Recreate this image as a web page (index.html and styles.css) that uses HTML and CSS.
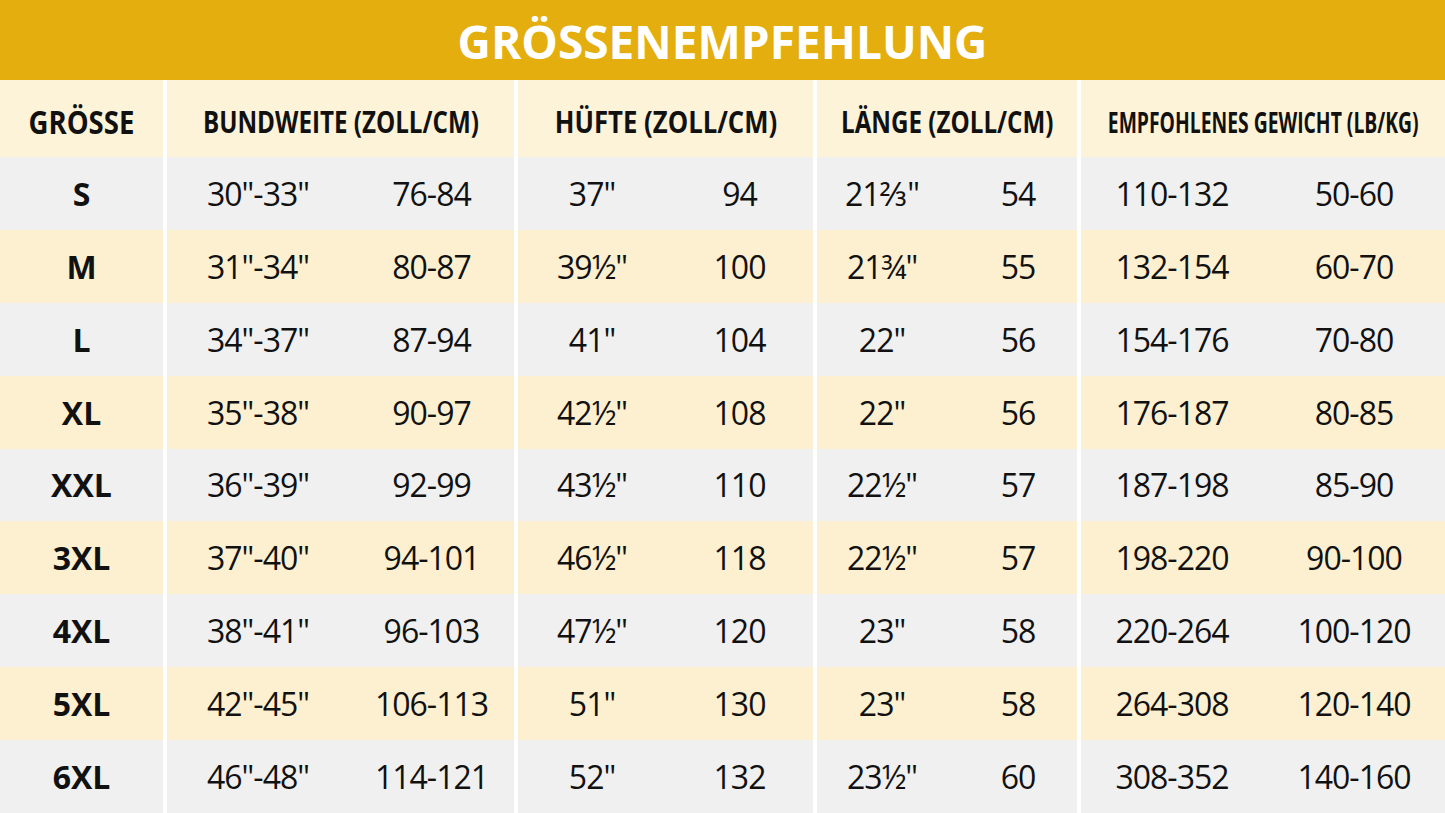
FILE: index.html
```html
<!DOCTYPE html>
<html lang="de">
<head>
<meta charset="utf-8">
<title>Größenempfehlung</title>
<link rel="stylesheet" href="styles.css">
</head>
<body>
<div class="page">
  <header class="title-bar"><h1 class="title">GRÖSSENEMPFEHLUNG</h1></header>
  <div class="table">
    <div class="row head">
      <div class="cell"><span class="cond first">GRÖSSE</span></div>
      <div class="cell grp span2"><span class="cond">BUNDWEITE (ZOLL/CM)</span></div>
      <div class="cell grp span2"><span class="cond wide">HÜFTE (ZOLL/CM)</span></div>
      <div class="cell grp span2"><span class="cond">LÄNGE (ZOLL/CM)</span></div>
      <div class="cell grp span2"><span class="cond tight">EMPFOHLENES GEWICHT (LB/KG)</span></div>
    </div>
    <div class="row gray">
      <div class="cell size">S</div>
      <div class="cell grp">30"-33"</div><div class="cell">76-84</div>
      <div class="cell grp">37"</div><div class="cell">94</div>
      <div class="cell grp">21⅔"</div><div class="cell shift">54</div>
      <div class="cell grp">110-132</div><div class="cell">50-60</div>
    </div>
    <div class="row yellow">
      <div class="cell size">M</div>
      <div class="cell grp">31"-34"</div><div class="cell">80-87</div>
      <div class="cell grp">39½"</div><div class="cell">100</div>
      <div class="cell grp">21¾"</div><div class="cell shift">55</div>
      <div class="cell grp">132-154</div><div class="cell">60-70</div>
    </div>
    <div class="row gray">
      <div class="cell size">L</div>
      <div class="cell grp">34"-37"</div><div class="cell">87-94</div>
      <div class="cell grp">41"</div><div class="cell">104</div>
      <div class="cell grp">22"</div><div class="cell shift">56</div>
      <div class="cell grp">154-176</div><div class="cell">70-80</div>
    </div>
    <div class="row yellow">
      <div class="cell size">XL</div>
      <div class="cell grp">35"-38"</div><div class="cell">90-97</div>
      <div class="cell grp">42½"</div><div class="cell">108</div>
      <div class="cell grp">22"</div><div class="cell shift">56</div>
      <div class="cell grp">176-187</div><div class="cell">80-85</div>
    </div>
    <div class="row gray">
      <div class="cell size">XXL</div>
      <div class="cell grp">36"-39"</div><div class="cell">92-99</div>
      <div class="cell grp">43½"</div><div class="cell">110</div>
      <div class="cell grp">22½"</div><div class="cell shift">57</div>
      <div class="cell grp">187-198</div><div class="cell">85-90</div>
    </div>
    <div class="row yellow">
      <div class="cell size">3XL</div>
      <div class="cell grp">37"-40"</div><div class="cell">94-101</div>
      <div class="cell grp">46½"</div><div class="cell">118</div>
      <div class="cell grp">22½"</div><div class="cell shift">57</div>
      <div class="cell grp">198-220</div><div class="cell">90-100</div>
    </div>
    <div class="row gray">
      <div class="cell size">4XL</div>
      <div class="cell grp">38"-41"</div><div class="cell">96-103</div>
      <div class="cell grp">47½"</div><div class="cell">120</div>
      <div class="cell grp">23"</div><div class="cell shift">58</div>
      <div class="cell grp">220-264</div><div class="cell">100-120</div>
    </div>
    <div class="row yellow">
      <div class="cell size">5XL</div>
      <div class="cell grp">42"-45"</div><div class="cell">106-113</div>
      <div class="cell grp">51"</div><div class="cell">130</div>
      <div class="cell grp">23"</div><div class="cell shift">58</div>
      <div class="cell grp">264-308</div><div class="cell">120-140</div>
    </div>
    <div class="row gray">
      <div class="cell size">6XL</div>
      <div class="cell grp">46"-48"</div><div class="cell">114-121</div>
      <div class="cell grp">52"</div><div class="cell">132</div>
      <div class="cell grp">23½"</div><div class="cell shift">60</div>
      <div class="cell grp">308-352</div><div class="cell">140-160</div>
    </div>
  </div>
</div>
</body>
</html>
```
FILE: styles.css
```css
* { box-sizing: border-box; margin: 0; padding: 0; }
html, body { width: 100%; height: 100%; }
body {
  background: #ffffff;
  font-family: "Open Sans", "Noto Sans", "DejaVu Sans", sans-serif;
  color: #111111;
  overflow: hidden;
}
.page {
  height: 813px;
  display: grid;
  grid-template-rows: 80px 1fr;
}
.title-bar {
  background: #e4ae0f;
  display: flex;
  align-items: center;
  justify-content: center;
}
.title {
  color: #ffffff;
  font-size: 46px;
  font-weight: 700;
  line-height: 1;
  padding-top: 2px;
}
.table {
  display: grid;
  grid-template-rows: 77px repeat(9, 1fr);
}
.row {
  display: grid;
  grid-template-columns: 163px 186px 165px 152px 147px 134px 130px 186px 182px;
}
.row.gray { background: #f0f0f0; }
.row.yellow { background: #fcf0d0; }
.row.head { background: #fdf3d8; }
.cell {
  display: flex;
  align-items: center;
  justify-content: center;
  font-size: 32px;
  font-weight: 400;
  letter-spacing: -1px;
  white-space: nowrap;
  min-width: 0;
}
.cell.grp { border-left: 4px solid #ffffff; }
.cell.shift { padding-left: 12px; }
.span2 { grid-column: span 2; }
.cell.size {
  font-weight: 700;
  letter-spacing: 0;
}
.head .cell {
  padding-top: 6px;
  letter-spacing: 0;
}
.cond {
  display: inline-block;
  flex-shrink: 0;
  font-weight: 700;
  font-size: 31px;
  line-height: 1;
  transform: scaleX(0.78);
}
.cond.first {
  font-size: 32px;
  transform: scaleX(0.86);
}
.cond.wide { transform: scaleX(0.83); }
.cond.tight {
  font-size: 28px;
  transform: scaleX(0.69);
}
```
